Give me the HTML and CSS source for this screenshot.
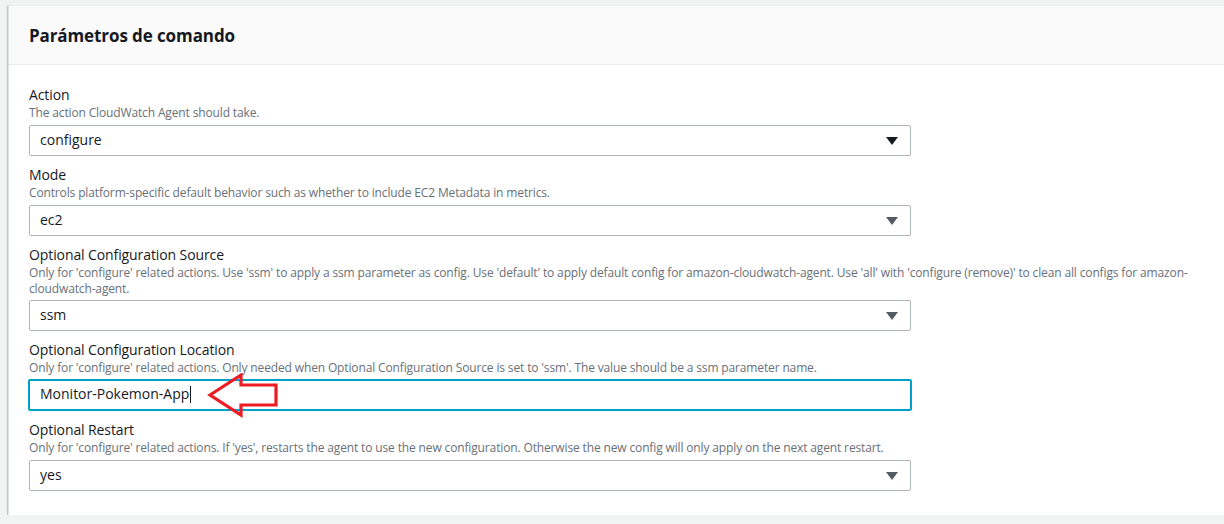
FILE: index.html
```html
<!DOCTYPE html>
<html lang="es">
<head>
<meta charset="utf-8">
<title>Parámetros de comando</title>
<link rel="stylesheet" href="styles.css">
</head>
<body>
<div class="card">
  <div class="card-header"><h2>Parámetros de comando</h2></div>
  <div class="card-body">
    <div class="field">
      <div class="label">Action</div>
      <div class="desc">The action CloudWatch Agent should take.</div>
      <div class="select"><span>configure</span><span class="tri tri-dark"></span></div>
    </div>
    <div class="field">
      <div class="label">Mode</div>
      <div class="desc">Controls platform-specific default behavior such as whether to include EC2 Metadata in metrics.</div>
      <div class="select"><span>ec2</span><span class="tri"></span></div>
    </div>
    <div class="field">
      <div class="label">Optional Configuration Source</div>
      <div class="desc">Only for 'configure' related actions. Use 'ssm' to apply a ssm parameter as config. Use 'default' to apply default config for amazon-cloudwatch-agent. Use 'all' with 'configure (remove)' to clean all configs for amazon-cloudwatch-agent.</div>
      <div class="select select-tight"><span>ssm</span><span class="tri"></span></div>
    </div>
    <div class="field">
      <div class="label">Optional Configuration Location</div>
      <div class="desc">Only for 'configure' related actions. Only needed when Optional Configuration Source is set to 'ssm'. The value should be a ssm parameter name.</div>
      <div class="input-wrap">
        <div class="input focused"><span>Monitor-Pokemon-App</span><span class="caret"></span></div>
        <svg class="arrow" width="80" height="46" viewBox="0 0 80 46">
          <path d="M5 22 L36 2 L36 12 L71 12 L71 32 L36 32 L36 42 Z" fill="none" stroke="#ed1c24" stroke-width="3.2" stroke-linejoin="miter"/>
        </svg>
      </div>
    </div>
    <div class="field">
      <div class="label">Optional Restart</div>
      <div class="desc">Only for 'configure' related actions. If 'yes', restarts the agent to use the new configuration. Otherwise the new config will only apply on the next agent restart.</div>
      <div class="select"><span>yes</span><span class="tri"></span></div>
    </div>
  </div>
</div>
</body>
</html>
```

FILE: styles.css
```css
html, body {
  margin: 0;
  background: #f2f3f3;
}
body {
  padding: 5px 0 0 8px;
  font-family: "Open Sans", "Noto Sans", Arial, sans-serif;
  color: #16191f;
  overflow: hidden;
}
.card {
  width: 1230px;
  background: #ffffff;
  border-left: 1px solid #dfe2e2;
  box-shadow: 0 1px 1px 0 rgba(0, 28, 36, 0.3), 1px 1px 1px 0 rgba(0, 28, 36, 0.15), -1px 1px 1px 0 rgba(0, 28, 36, 0.15);
}
.card-header {
  background: #fafafa;
  border-bottom: 1px solid #eaeded;
  height: 58px;
  padding: 0 20px;
  display: flex;
  align-items: center;
  border-top: 1px solid #eaeded;
}
.card-header h2 {
  margin: 0;
  font-size: 17px;
  font-weight: 700;
  color: #16191f;
  letter-spacing: -0.1px;
}
.card-body {
  padding: 20px 20px 24px 20px;
}
.field {
  margin-bottom: 9px;
  max-width: 1165px;
}
.field:last-child {
  margin-bottom: 0;
}
.label {
  font-size: 14px;
  line-height: 20px;
  color: #16191f;
  letter-spacing: -0.1px;
}
.desc {
  font-size: 12px;
  line-height: 16px;
  color: #687078;
  margin-bottom: 4px;
  letter-spacing: -0.14px;
}
.select, .input {
  box-sizing: border-box;
  width: 882px;
  height: 31px;
  border: 1px solid #aab7b8;
  border-radius: 2px;
  display: flex;
  align-items: center;
  justify-content: space-between;
  padding: 0 12px 0 10px;
  font-size: 14px;
  line-height: 20px;
  color: #16191f;
  background: #fff;
}
.select-tight {
  margin-top: -1px;
}
.select span:first-child, .input span:first-child {
  margin-top: -2px;
}
.tri {
  width: 0;
  height: 0;
  border-left: 6px solid transparent;
  border-right: 6px solid transparent;
  border-top: 8px solid #545b64;
}
.tri-dark {
  border-top-color: #16191f;
}
.input-wrap {
  position: relative;
  width: 884px;
  margin-left: -1px;
  margin-top: -1px;
}
.input.focused {
  width: 884px;
  height: 32px;
  border: 2px solid #00a1c9;
  padding-left: 10px;
  justify-content: flex-start;
}
.caret {
  display: inline-block;
  width: 1px;
  height: 17px;
  background: #16191f;
  margin-left: 1px;
  margin-top: -2px;
}
.arrow {
  position: absolute;
  left: 177px;
  top: -6px;
}
```
